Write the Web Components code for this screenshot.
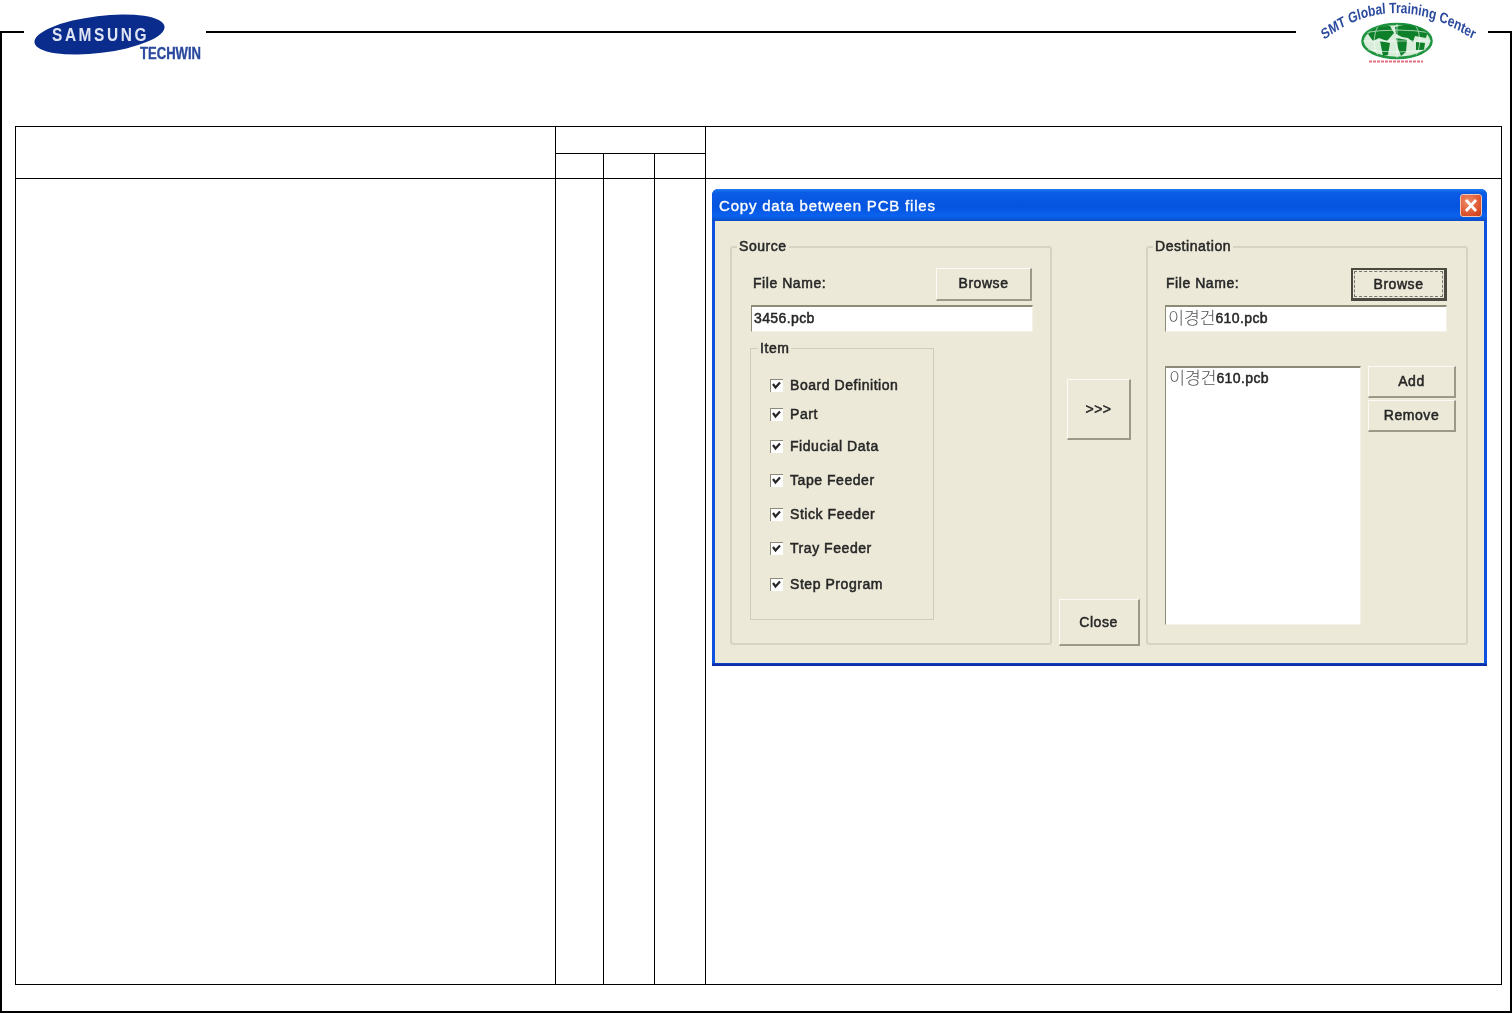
<!DOCTYPE html>
<html lang="en">
<head>
<meta charset="utf-8">
<title>Copy data between PCB files</title>
<style>
    html, body { margin: 0; background: #fff; }
</style>
</head>
<body>
<page-frame>
    <samsung-logo slot="logos"></samsung-logo>
    <smt-logo slot="logos"></smt-logo>
    <spec-table>
        <xp-dialog caption="Copy data between PCB files">
            <group-box slot="source" legend="Source" class="outer">
                <file-row label="File Name:"><xp-button w="96" h="33">Browse</xp-button></file-row>
                <xp-field w="282" x="21"><span>3456.pcb</span></xp-field>
                <item-group>
                    <xp-check at="37">Board Definition</xp-check>
                    <xp-check at="66">Part</xp-check>
                    <xp-check at="98">Fiducial Data</xp-check>
                    <xp-check at="132">Tape Feeder</xp-check>
                    <xp-check at="166">Stick Feeder</xp-check>
                    <xp-check at="200">Tray Feeder</xp-check>
                    <xp-check at="236">Step Program</xp-check>
                </item-group>
            </group-box>
            <xp-button slot="arrow" w="64" h="61">&gt;&gt;&gt;</xp-button>
            <xp-button slot="close" w="81" h="47">Close</xp-button>
            <group-box slot="dest" legend="Destination" class="outer">
                <file-row label="File Name:" class="dest"><xp-button w="96" h="33" default>Browse</xp-button></file-row>
                <xp-field w="282" x="19"><i>이경건</i><span>610.pcb</span></xp-field>
                <list-box>
                    <i>이경건</i><span>610.pcb</span>
                    <xp-button slot="side" w="88" h="32">Add</xp-button>
                    <xp-button slot="side" w="88" h="32">Remove</xp-button>
                </list-box>
            </group-box>
        </xp-dialog>
    </spec-table>
</page-frame>

<script>
// small helper, every element here is just a template in an open shadow root
function define(name, markup, setup) {
    const template = document.createElement('template');
    template.innerHTML = markup;
    customElements.define(name, class extends HTMLElement {
        constructor() {
            super();
            this.root = this.attachShadow({ mode: 'open' });
            this.root.append(template.content.cloneNode(true));
        }
        connectedCallback() {
            if (setup) setup(this, this.root);
        }
    });
}

define('page-frame', `
<style>
    :host { display: block; position: relative; width: 1512px; height: 1014px; overflow: hidden; padding-top: 31px; box-sizing: border-box; }
    .frame {
        box-sizing: border-box;
        width: 1512px;
        height: 982px;
        padding: 93px 0 0 13px;
        border: 2px solid #000;
    }
</style>
<div class="frame"><slot></slot></div>
<slot name="logos"></slot>
`);

define('samsung-logo', `
<style>
    :host { display: block; position: absolute; left: 24px; top: 0; width: 182px; height: 70px; background: #fff; }
    svg { display: block; filter: blur(0.6px); }
    text { font-family: "Liberation Sans", sans-serif; font-weight: 700; }
</style>
<svg width="182" height="70" viewBox="0 0 182 70">
    <ellipse cx="75.5" cy="34.5" rx="65.5" ry="18.5" fill="#0a2c8c" transform="rotate(-7 75.5 34.5)"/>
    <text x="28" y="41" font-size="18" fill="#dfe4f2" textLength="97" lengthAdjust="spacingAndGlyphs" letter-spacing="3">SAMSUNG</text>
    <text transform="translate(116 59) scale(1 1.15)" font-size="14" fill="#2b4a9e" stroke="#2b4a9e" stroke-width=".3" textLength="61" lengthAdjust="spacingAndGlyphs">TECHWIN</text>
</svg>
`);

define('smt-logo', `
<style>
    :host { display: block; position: absolute; left: 1296px; top: 0; width: 192px; height: 72px; background: #fff; }
    svg { display: block; filter: blur(0.7px); }
    text { font-family: "Liberation Sans", sans-serif; font-weight: 700; }
</style>
<svg width="192" height="72" viewBox="0 0 192 72">
    <defs>
        <path id="arc" d="M 35 40 Q 125 -16 230 44"/>
        <clipPath id="globe"><ellipse cx="101" cy="41" rx="34" ry="17"/></clipPath>
    </defs>
    <g transform="scale(.8 1)">
        <text font-size="15" fill="#2b4a9e"><textPath href="#arc">SMT Global Training Center</textPath></text>
    </g>
    <ellipse cx="101" cy="41" rx="34.5" ry="17" fill="#d8edda" stroke="#1f9440" stroke-width="2.6"/>
    <g clip-path="url(#globe)">
        <path d="M72 34 Q80 25 94 26 L98 33 L91 41 L83 38 L77 41 Z M84 41 L94 43 L92 55 L87 56 Z M99 27 L112 24 L132 30 L130 38 L119 36 L117 42 L112 38 L106 37 L100 34 Z M100 38 L111 40 L110 52 L105 56 L102 48 Z M120 42 L129 43 L128 50 L120 50 Z" fill="#0e8029"/>
        <g fill="none" stroke="#fff" stroke-width=".8" opacity=".75">
            <path d="M66 33 Q101 27 136 33 M66 41 H136 M66 49 Q101 55 136 49"/>
            <path d="M101 22 V60 M84 22 Q72 41 84 60 M118 22 Q130 41 118 60"/>
        </g>
    </g>
    <path d="M73 61.5 H127" stroke="#d9405a" stroke-width="2" stroke-dasharray="3 1" opacity=".75"/>
</svg>
`);

define('spec-table', `
<style>
    :host { display: block; width: 1487px; height: 859px; }
    .grid {
        display: grid;
        box-sizing: border-box;
        width: 1487px;
        height: 859px;
        padding: 1px;
        gap: 1px;
        background: #000;
        grid-template-columns: 539px 47px 50px 50px 1fr;
        grid-template-rows: 26px 24px 1fr;
    }
    .grid > div { background: #fff; }
    .name { grid-row: 1 / 3; }
    .check { grid-column: 2 / 5; }
    .shot { grid-column: 5; grid-row: 1 / 3; }
    .body { padding: 10px 0 0 6px; }
</style>
<div class="grid">
    <div class="name"></div>
    <div class="check"></div>
    <div class="shot"></div>
    <div></div><div></div><div></div>
    <div></div><div></div><div></div><div></div>
    <div class="body"><slot></slot></div>
</div>
`);

define('xp-dialog', `
<style>
    :host {
        display: block;
        width: 775px;
        height: 477px;
        font: 14px "Liberation Sans", "Noto Sans CJK KR", sans-serif;
        letter-spacing: 0.55px;
        color: #262626;
    }
    .window {
        box-sizing: border-box;
        display: flex;
        flex-direction: column;
        height: 100%;
        padding: 0 3px 3px;
        border-radius: 6px 6px 0 0;
        background: linear-gradient(#0f52e0 0, #0f52e0 calc(100% - 3px), #0a2fa8 calc(100% - 2px), #0a2fa8 100%);
        filter: blur(0.5px);
    }
    .title {
        display: flex;
        align-items: center;
        justify-content: space-between;
        flex: none;
        height: 32px;
        margin: 0 -3px;
        padding: 0 5px 0 7px;
        border-radius: 6px 6px 0 0;
        background: linear-gradient(#1f7bf2 0, #0a5be6 12%, #0554e0 55%, #0a62ee 85%, #0a4cc4 100%);
        color: #fff;
        font-size: 15px;
        -webkit-text-stroke: 0.35px #fff;
        letter-spacing: 0.8px;
    }
    .close {
        box-sizing: border-box;
        width: 22px;
        height: 23px;
        margin-top: 1px;
        border: 1px solid #f0c8b4;
        border-radius: 3px;
        background: radial-gradient(circle at 35% 30%, #ee8c68, #dc5029 70%, #c23a16);
    }
    .close svg { display: block; }
    .client {
        flex: 1;
        display: grid;
        grid-template-columns: 322px 94px 322px;
        padding: 25px 15px 17px;
        background: #ece9d8;
        -webkit-text-stroke: 0.5px #262626;
    }
    .middle {
        display: flex;
        flex-direction: column;
        align-items: center;
        justify-content: space-between;
        padding: 133px 0 0;
    }
</style>
<div class="window">
    <div class="title">
        <span id="cap"></span>
        <div class="close"><svg width="20" height="21" viewBox="0 0 20 21"><path d="M5 5 L15 16 M15 5 L5 16" stroke="#fff" stroke-width="2.8"/></svg></div>
    </div>
    <div class="client">
        <slot name="source"></slot>
        <div class="middle"><slot name="arrow"></slot><slot name="close"></slot></div>
        <slot name="dest"></slot>
    </div>
</div>
`, (el, root) => {
    root.getElementById('cap').textContent = el.getAttribute('caption');
});

define('group-box', `
<style>
    :host {
        display: block;
        box-sizing: border-box;
        height: 399px;
        border: 2px solid #d6d3c3;
        border-radius: 3px;
    }
    .legend {
        width: fit-content;
        height: 16px;
        line-height: 16px;
        margin: -10px 0 0 5px;
        padding: 0 2px;
        background: #ece9d8;
    }
</style>
<div class="legend" id="legend"></div>
<slot></slot>
`, (el, root) => {
    root.getElementById('legend').textContent = el.getAttribute('legend');
});

define('file-row', `
<style>
    :host { display: flex; align-items: center; justify-content: space-between; width: 279px; height: 33px; margin: 14px 0 0 21px; }
    :host(.dest) { margin-left: 18px; width: 281px; }
    span { position: relative; top: -2px; }
</style>
<span id="label"></span>
<slot></slot>
`, (el, root) => {
    root.getElementById('label').textContent = el.getAttribute('label');
});

define('xp-button', `
<style>
    :host {
        display: block;
        box-sizing: border-box;
        flex: none;
        border: 1px solid #fbfaf4;
        border-right: 2px solid #9c9a86;
        border-bottom: 2px solid #9c9a86;
        background: #ece9d8;
        text-align: center;
    }
    :host([default]) { border: 2px solid #4a4a40; border-right-width: 3px; border-bottom-width: 3px; padding: 1px; }
    .face { display: flex; align-items: center; justify-content: center; box-sizing: border-box; height: 100%; padding-bottom: 2px; }
    :host([slot="arrow"]) .face, :host([slot="close"]) .face { padding-bottom: 0; }
    :host([default]) .face { border: 1px dashed #77766a; padding-bottom: 0; }
</style>
<div class="face"><slot></slot></div>
`, (el) => {
    el.style.width = el.getAttribute('w') + 'px';
    el.style.height = el.getAttribute('h') + 'px';
});

define('xp-field', `
<style>
    :host {
        display: block;
        box-sizing: border-box;
        height: 27px;
        margin-top: 4px;
        padding: 0 0 0 2px;
        line-height: 23px;
        border-top: 2px solid #8d8b78;
        border-left: 1px solid #8d8b78;
        border-right: 1px solid #f4f2e8;
        border-bottom: 1px solid #f4f2e8;
        background: #fff;
        white-space: nowrap;
        overflow: hidden;
    }
    ::slotted(i) { font: 300 17.5px/1 "Noto Sans CJK KR", sans-serif; color: #555; letter-spacing: -0.3px; -webkit-text-stroke: 0; vertical-align: -1px; }
    ::slotted(span) { letter-spacing: 0.4px; }
</style>
<slot></slot>
`, (el) => {
    el.style.width = el.getAttribute('w') + 'px';
    el.style.marginLeft = el.getAttribute('x') - 2 + 'px';
});

define('item-group', `
<style>
    :host {
        display: block;
        position: relative;
        box-sizing: border-box;
        width: 184px;
        height: 272px;
        margin: 16px 0 0 18px;
        border: 1px solid #cfccbb;
    }
    .legend {
        width: fit-content;
        height: 16px;
        line-height: 16px;
        margin: -9px 0 0 7px;
        padding: 0 2px;
        background: #ece9d8;
    }
</style>
<div class="legend">Item</div>
<slot></slot>
`);

// the checkboxes sit at uneven heights in the source dialog, so each keeps its own offset
define('xp-check', `
<style>
    :host {
        display: flex;
        align-items: center;
        gap: 7px;
        position: absolute;
        left: 19px;
        height: 18px;
    }
    .box {
        box-sizing: border-box;
        width: 13px;
        height: 13px;
        border-top: 1px solid #8d8b78;
        border-left: 1px solid #8d8b78;
        background: #fff;
    }
    .box svg { display: block; }
</style>
<div class="box"><svg width="12" height="12" viewBox="0 0 12 12"><path d="M2 4 L4.5 7.5 L9 2.5" fill="none" stroke="#262626" stroke-width="2.2"/></svg></div>
<span><slot></slot></span>
`, (el) => {
    el.style.top = el.getAttribute('at') - 10 + 'px';
});

define('list-box', `
<style>
    :host { display: flex; gap: 7px; margin: 34px 0 0 17px; }
    .list {
        box-sizing: border-box;
        width: 196px;
        height: 259px;
        padding: 0 0 0 3px;
        line-height: 19px;
        border-top: 2px solid #8d8b78;
        border-left: 1px solid #8d8b78;
        border-right: 1px solid #f4f2e8;
        border-bottom: 1px solid #f4f2e8;
        background: #fff;
        white-space: nowrap;
    }
    .side { display: flex; flex-direction: column; gap: 2px; }
    ::slotted(i) { font: 300 17.5px/1 "Noto Sans CJK KR", sans-serif; color: #555; letter-spacing: -0.3px; -webkit-text-stroke: 0; vertical-align: -1px; }
    ::slotted(span) { letter-spacing: 0.4px; }
</style>
<div class="list"><slot></slot></div>
<div class="side"><slot name="side"></slot></div>
`);
</script>
</body>
</html>
